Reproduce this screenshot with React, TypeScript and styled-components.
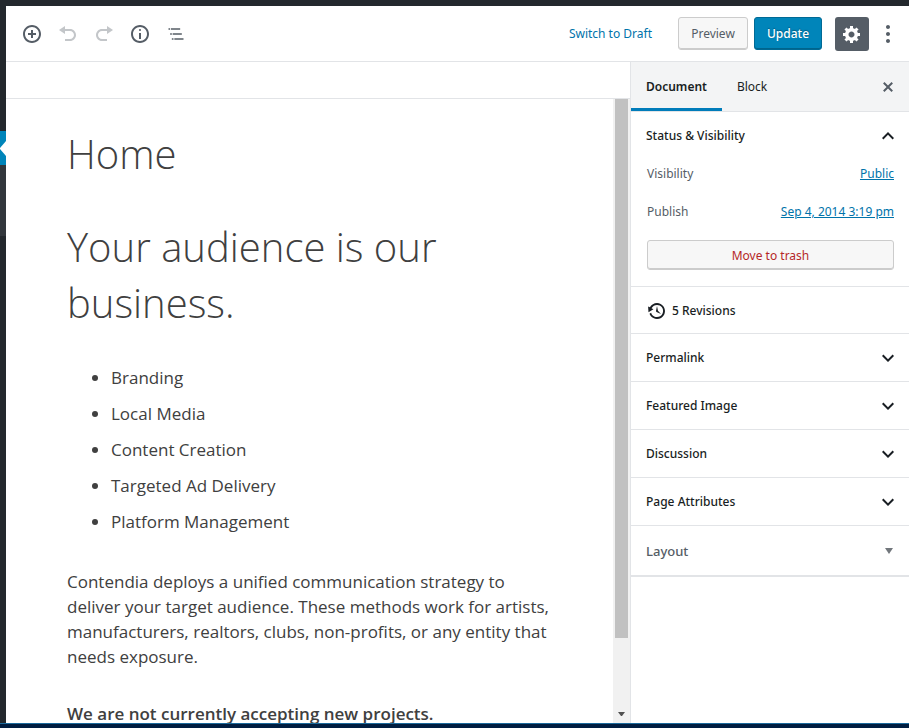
import React from "react";
import styled, { createGlobalStyle, css } from "styled-components";

const GlobalStyle = createGlobalStyle`
  *, *::before, *::after { box-sizing: border-box; }
  body { margin: 0; background: #fff; color: #191e23; }
  body, button { font-family: "Noto Sans", "Open Sans", sans-serif; font-size: 12px; line-height: 20px; }
  button { margin: 0; padding: 0; border: 0; background: none; color: inherit; cursor: pointer; }
`;

const line = "#e2e4e7";

const Shell = styled.div`
  display: grid;
  grid-template: 6px minmax(0, 1fr) 5px / 6px minmax(0, 1fr);
  height: 100vh;
`;

const AdminBar = styled.div`
  grid-column: 1 / -1;
  background: #23282d;
`;

const AdminMenu = styled.nav`
  display: flex;
  flex-direction: column;
  padding-top: 125px;
  background: #23282d;
`;

const MenuCurrent = styled.div`
  display: flex;
  align-items: center;
  height: 34px;
  background: #0085ba;
  svg { display: block; }
`;

const MenuSub = styled.div`
  height: 71px;
  background: #32373c;
`;

const Taskbar = styled.div`
  grid-column: 1 / -1;
  border-top: 1px solid #1b6a9c;
  background: #001d40;
`;

const Editor = styled.div`
  display: flex;
  flex-direction: column;
  min-width: 0;
  min-height: 0;
`;

const Header = styled.header`
  display: flex;
  flex: none;
  align-items: center;
  justify-content: space-between;
  height: 56px;
  padding: 0 3px 0 8px;
  border-bottom: 1px solid ${line};
`;

const Tools = styled.div`
  display: flex;
  align-items: center;
`;

const IconButton = styled.button`
  display: flex;
  align-items: center;
  justify-content: center;
  width: 36px;
  height: 36px;
  color: #555d66;
  &:disabled { opacity: 0.35; cursor: default; }
`;

const SettingsButton = styled(IconButton)`
  width: 34px;
  height: 34px;
  margin: 0 1px 0 13px;
  border-radius: 3px;
  background: #555d66;
  color: #fff;
`;

const DraftButton = styled.button`
  margin-right: 26px;
  padding-top: 1px;
  color: #0073aa;
`;

const raised = css`
  border: 1px solid #ccc;
  border-radius: 3px;
  background: #f7f7f7;
  box-shadow: inset 0 -1px 0 #ccc;
`;

const PreviewButton = styled.button`
  ${raised}
  min-width: 70px;
  height: 33px;
  margin-right: 6px;
  padding: 1px 8px 0;
  color: #555d66;
`;

const UpdateButton = styled.button`
  min-width: 68px;
  height: 33px;
  padding: 1px 8px 0;
  border: 1px solid #006a95;
  border-radius: 3px;
  background: #0085ba;
  box-shadow: inset 0 -1px 0 #00648c;
  color: #fff;
  font-weight: 500;
  text-shadow: 0 -1px 1px #005d82;
`;

const Workspace = styled.div`
  display: grid;
  flex: 1;
  grid-template-columns: minmax(0, 1fr) 279px;
  min-height: 0;
`;

const Main = styled.main`
  display: flex;
  flex-direction: column;
  min-height: 0;
`;

const NoticeBar = styled.div`
  flex: none;
  height: 37px;
  border-bottom: 1px solid ${line};
`;

const CanvasRow = styled.div`
  display: grid;
  flex: 1;
  grid-template-columns: minmax(0, 1fr) 17px;
  min-height: 0;
`;

const Canvas = styled.article`
  min-height: 0;
  overflow: hidden;
  padding: 27px 61px;
  color: #404040;
  font-family: "Open Sans", sans-serif;
  font-size: 17px;
  line-height: 25px;
`;

const Title = styled.h1`
  margin: 0 0 37px;
  font-size: 40px;
  font-weight: 300;
  line-height: 56px;
`;

const Heading = styled.h2`
  margin: 0 0 29px;
  font-size: 40px;
  font-weight: 300;
  line-height: 56px;
`;

const List = styled.ul`
  margin: 0 0 29px;
  padding-left: 44px;
  line-height: 36px;
`;

const Paragraph = styled.p<{ $strong?: boolean }>`
  margin: 0 0 32px;
  font-weight: ${(p) => (p.$strong ? 600 : 400)};
`;

const ScrollTrack = styled.div`
  display: flex;
  flex-direction: column;
  align-items: center;
  justify-content: space-between;
  background: #f1f1f1;
`;

const ScrollThumb = styled.div`
  width: 13px;
  height: 539px;
  background: #c1c1c1;
`;

const ScrollArrow = styled.svg`
  margin-bottom: 7px;
`;

const Sidebar = styled.aside`
  min-height: 0;
  overflow: hidden;
  border-left: 1px solid ${line};
`;

const Tabs = styled.div`
  display: flex;
  height: 50px;
  border-bottom: 1px solid ${line};
  background: #f3f4f5;
`;

const Tab = styled.button<{ $active?: boolean }>`
  padding: 4px 15px 0;
  border-bottom: 3px solid ${(p) => (p.$active ? "#007cba" : "transparent")};
  font-weight: ${(p) => (p.$active ? 600 : 400)};
`;

const CloseButton = styled(IconButton)`
  align-self: center;
  margin: 0 3px 0 auto;
`;

const Panel = styled.section`
  border-bottom: 1px solid ${line};
`;

const PanelToggle = styled.button`
  display: flex;
  align-items: center;
  justify-content: space-between;
  width: 100%;
  height: 47px;
  padding: 1px 9px 0 15px;
  font-weight: 500;
  text-align: left;
`;

const MetaToggle = styled(PanelToggle)`
  height: 49px;
  padding: 0 16px 0 15px;
  color: #555d66;
  font-size: 13px;
`;

const MetaPanel = styled(Panel)`
  border-bottom-width: 2px;
`;

const Fields = styled.div`
  display: flex;
  flex-direction: column;
  gap: 18px;
  padding: 5px 15px 16px 16px;
`;

const Field = styled.div`
  display: flex;
  justify-content: space-between;
  color: #555d66;
`;

const FieldLink = styled.a`
  color: #0073aa;
  text-decoration: underline;
`;

const TrashButton = styled.button`
  ${raised}
  height: 30px;
  padding-top: 1px;
  color: #b52727;
`;

const Revisions = styled.button`
  display: flex;
  align-items: center;
  gap: 5px;
  width: 100%;
  height: 46px;
  padding: 1px 16px 0;
  font-weight: 500;
`;

type IconProps = { d: string; size?: number; box?: number };

const Icon = ({ d, size = 20, box = 20 }: IconProps) => (
  <svg width={size} height={size} viewBox={`0 0 ${box} ${box}`} fill="currentColor" aria-hidden="true">
    <path d={d} />
  </svg>
);

const icons = {
  add: "M10 1c-5 0-9 4-9 9s4 9 9 9 9-4 9-9-4-9-9-9zm0 16c-3.9 0-7-3.1-7-7s3.1-7 7-7 7 3.1 7 7-3.1 7-7 7zm1-11H9v3H6v2h3v3h2v-3h3V9h-3V6z",
  undo: "M12 5H7V2L1 6l6 4V7h5c2.2 0 4 1.8 4 4s-1.8 4-4 4H7v2h5c3.3 0 6-2.7 6-6s-2.7-6-6-6z",
  redo: "M8 5h5V2l6 4-6 4V7H8c-2.2 0-4 1.8-4 4s1.8 4 4 4h5v2H8c-3.3 0-6-2.7-6-6s2.7-6 6-6z",
  info: "M9 15h2V9H9v6zm1-10c-.5 0-1 .5-1 1s.5 1 1 1 1-.5 1-1-.5-1-1-1zm0-4c-5 0-9 4-9 9s4 9 9 9 9-4 9-9-4-9-9-9zm0 16c-3.9 0-7-3.1-7-7s3.1-7 7-7 7 3.1 7 7-3.1 7-7 7z",
  outline: "M5 5H3v2h2V5zm3 8h11v-2H8v2zm9-8H6v2h11V5zM7 11H5v2h2v-2zm0 8h2v-2H7v2zm3-2v2h11v-2H10z",
  gear: "M18 12h-2.18c-.17.7-.44 1.35-.81 1.93l1.54 1.54-2.1 2.1-1.54-1.54c-.58.36-1.23.63-1.91.79V19H8v-2.18c-.68-.16-1.33-.43-1.91-.79l-1.54 1.54-2.12-2.12 1.54-1.54c-.36-.58-.63-1.23-.79-1.91H1V9.03h2.17c.16-.7.44-1.35.8-1.94L2.43 5.55l2.1-2.1 1.54 1.54c.58-.37 1.24-.64 1.93-.81V2h3v2.18c.68.16 1.33.43 1.91.79l1.54-1.54 2.12 2.12-1.54 1.54c.36.59.64 1.24.8 1.94H18V12zm-8.5 1.5c1.66 0 3-1.34 3-3s-1.34-3-3-3-3 1.34-3 3 1.34 3 3 3z",
  more: "M10 1c-1.1 0-2 .9-2 2s.9 2 2 2 2-.9 2-2-.9-2-2-2zm0 7c-1.1 0-2 .9-2 2s.9 2 2 2 2-.9 2-2-.9-2-2-2zm0 7c-1.1 0-2 .9-2 2s.9 2 2 2 2-.9 2-2-.9-2-2-2z",
  close: "M14.95 6.46L11.41 10l3.54 3.54-1.41 1.41L10 11.42l-3.53 3.53-1.42-1.42L8.58 10 5.05 6.47l1.42-1.42L10 8.58l3.54-3.53z",
  history: "M13.65 2.88c3.93 2.01 5.48 6.84 3.47 10.77s-6.83 5.48-10.77 3.47c-1.87-.96-3.2-2.56-3.86-4.4l1.64-1.03c.45 1.57 1.52 2.95 3.08 3.76 3.01 1.54 6.69.35 8.23-2.66 1.55-3.01.36-6.69-2.65-8.24C9.78 3.01 6.1 4.2 4.56 7.21l1.88.97-4.95 3.08-.39-5.82 1.78.91C4.9 2.4 9.75.89 13.65 2.88zm-4.36 7.83C9.11 10.53 9 10.28 9 10c0-.07.03-.12.04-.19h-.01L10 5l.97 4.81L14 13l-4.5-2.12.02-.02c-.08-.04-.16-.09-.23-.15z",
  down: "M7.41,8.59L12,13.17l4.59-4.58L18,10l-6,6l-6-6L7.41,8.59z",
  up: "M12,8l-6,6l1.41,1.41L12,10.83l4.59,4.58L18,14L12,8z",
};

const services = ["Branding", "Local Media", "Content Creation", "Targeted Ad Delivery", "Platform Management"];
const panels = ["Permalink", "Featured Image", "Discussion", "Page Attributes"];

export default function App() {
  return (
    <>
      <GlobalStyle />
      <Shell>
        <AdminBar />
        <AdminMenu aria-label="Admin menu">
          <MenuCurrent>
            <svg width="6" height="16" viewBox="0 0 6 16" aria-hidden="true">
              <path d="M6 1v15L0 9V8z" fill="#fff" />
            </svg>
          </MenuCurrent>
          <MenuSub />
        </AdminMenu>
        <Editor>
          <Header>
            <Tools>
              <IconButton aria-label="Add block"><Icon d={icons.add} /></IconButton>
              <IconButton aria-label="Undo" disabled><Icon d={icons.undo} /></IconButton>
              <IconButton aria-label="Redo" disabled><Icon d={icons.redo} /></IconButton>
              <IconButton aria-label="Content structure"><Icon d={icons.info} /></IconButton>
              <IconButton aria-label="Block navigation"><Icon d={icons.outline} box={24} /></IconButton>
            </Tools>
            <Tools>
              <DraftButton>Switch to Draft</DraftButton>
              <PreviewButton>Preview</PreviewButton>
              <UpdateButton>Update</UpdateButton>
              <SettingsButton aria-label="Settings"><Icon d={icons.gear} /></SettingsButton>
              <IconButton aria-label="More options"><Icon d={icons.more} /></IconButton>
            </Tools>
          </Header>
          <Workspace>
            <Main>
              <NoticeBar />
              <CanvasRow>
                <Canvas>
                  <Title>Home</Title>
                  <Heading>Your audience is our business.</Heading>
                  <List>
                    {services.map((s) => <li key={s}>{s}</li>)}
                  </List>
                  <Paragraph>
                    Contendia deploys a unified communication strategy to deliver your target audience. These methods
                    work for artists, manufacturers, realtors, clubs, non-profits, or any entity that needs exposure.
                  </Paragraph>
                  <Paragraph $strong>We are not currently accepting new projects.</Paragraph>
                </Canvas>
                <ScrollTrack aria-hidden="true">
                  <ScrollThumb />
                  <ScrollArrow width="7" height="4" viewBox="0 0 7 4">
                    <path d="M0 0h7L4 4H3z" fill="#505050" />
                  </ScrollArrow>
                </ScrollTrack>
              </CanvasRow>
            </Main>
            <Sidebar>
              <Tabs>
                <Tab $active>Document</Tab>
                <Tab>Block</Tab>
                <CloseButton aria-label="Close settings"><Icon d={icons.close} /></CloseButton>
              </Tabs>
              <Panel>
                <PanelToggle aria-expanded="true">
                  Status &amp; Visibility
                  <Icon d={icons.up} box={24} size={24} />
                </PanelToggle>
                <Fields>
                  <Field>Visibility <FieldLink href="#visibility">Public</FieldLink></Field>
                  <Field>Publish <FieldLink href="#publish">Sep 4, 2014 3:19 pm</FieldLink></Field>
                  <TrashButton>Move to trash</TrashButton>
                </Fields>
              </Panel>
              <Panel>
                <Revisions><Icon d={icons.history} />5 Revisions</Revisions>
              </Panel>
              {panels.map((name) => (
                <Panel key={name}>
                  <PanelToggle aria-expanded="false">
                    {name}
                    <Icon d={icons.down} box={24} size={24} />
                  </PanelToggle>
                </Panel>
              ))}
              <MetaPanel>
                <MetaToggle aria-expanded="false">
                  Layout
                  <svg width="8" height="6" viewBox="0 0 8 6" aria-hidden="true">
                    <path d="M0 0h8L4 6z" fill="#72777c" />
                  </svg>
                </MetaToggle>
              </MetaPanel>
            </Sidebar>
          </Workspace>
        </Editor>
        <Taskbar />
      </Shell>
    </>
  );
}
